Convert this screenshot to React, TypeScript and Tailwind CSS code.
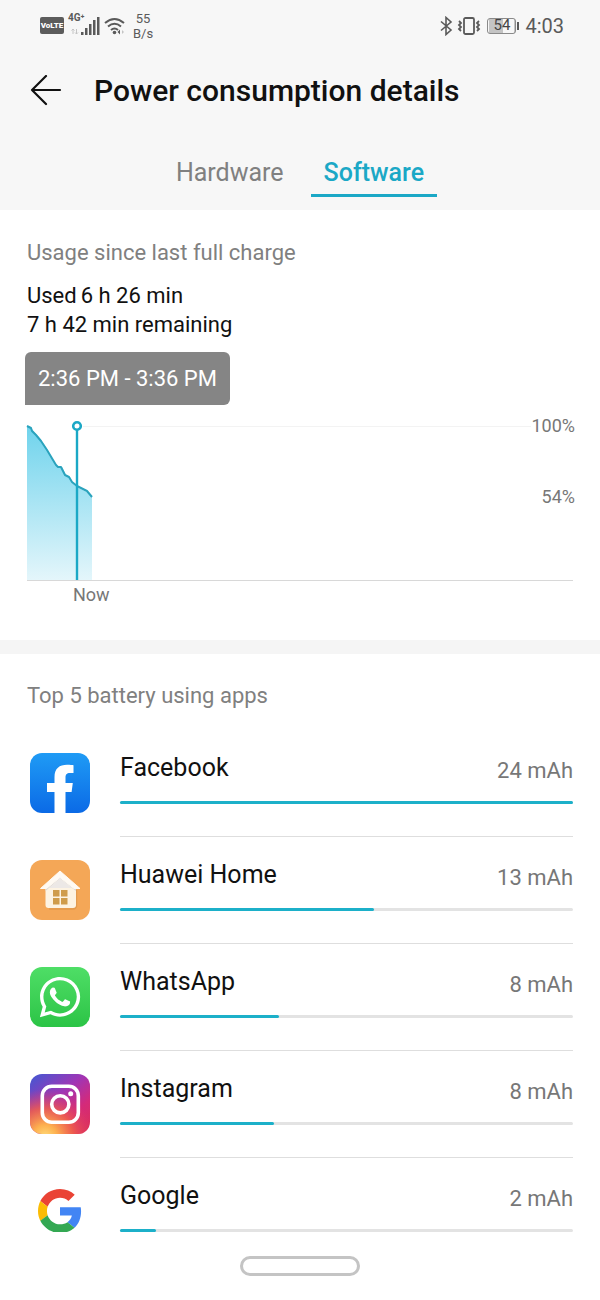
import type { ReactNode } from "react"
import { FaWhatsapp } from "react-icons/fa"

type AppUsage = {
  name: string
  usage: number
  percent: number
  icon: ReactNode
}

function FacebookIcon() {
  return (
    <svg viewBox="0 0 60 60" className="size-full" aria-hidden="true">
      <defs>
        <linearGradient id="fb" x1="0" y1="0" x2="0" y2="1">
          <stop offset="0" stopColor="#1f9bf5" />
          <stop offset="1" stopColor="#0b6ae6" />
        </linearGradient>
      </defs>
      <rect width="60" height="60" rx="12" fill="url(#fb)" />
      <path
        d="M24.500 60V39H17V30H24.500V24C24.500 15.500 29.500 11.800 37 11.800C40 11.800 42.500 12 43.500 12.300V20H40C36.500 20 35.500 21.700 35.500 24.600V30H42.800L41.600 39H35.500V60Z"
        fill="#fff"
      />
    </svg>
  )
}

function HomeIcon() {
  return (
    <svg viewBox="0 0 60 60" className="size-full" aria-hidden="true">
      <rect width="60" height="60" rx="12" fill="#f4a757" />
      <path d="M46.500 30V46Q46 48.500 43 49H19" fill="none" stroke="#e29a4e" strokeWidth="1.500" />
      <path d="M15.500 26L30 14L46 26V45Q46 48 43 48H18.500Q15.500 48 15.500 45Z" fill="#fdf3e2" />
      <path d="M15.500 28L30 16L46 28V31L30 18.500L15.500 31Z" fill="#dcd8d6" />
      <path d="M19 28L30 18.500L42 28Z" fill="#ece8e6" />
      <path d="M30 11L50 28.500H44L30 17.500L16.500 28.500H10.500Z" fill="#fffaf3" stroke="#fffaf3" strokeLinejoin="round" />
      <g fill="#cf9c4b">
        <rect x="23" y="30" width="6.500" height="6.500" />
        <rect x="31" y="30" width="6.500" height="6.500" />
        <rect x="23" y="38" width="6.500" height="6.500" />
        <rect x="31" y="38" width="6.500" height="6.500" />
      </g>
    </svg>
  )
}

function WhatsAppIcon() {
  return (
    <span className="flex size-full items-center justify-center rounded-xl bg-linear-to-b from-[#4ede66] to-[#2bc446]">
      <FaWhatsapp className="size-[46px] text-white" aria-hidden="true" />
    </span>
  )
}

function InstagramIcon() {
  return (
    <svg viewBox="0 0 60 60" className="size-full" aria-hidden="true">
      <defs>
        <linearGradient id="igBase" x1="0.1" y1="0" x2="0.9" y2="1">
          <stop offset="0" stopColor="#4a55d0" />
          <stop offset="0.400" stopColor="#a035b5" />
          <stop offset="0.700" stopColor="#d42a7a" />
          <stop offset="1" stopColor="#dc3058" />
        </linearGradient>
        <radialGradient id="igWarm" cx="0.25" cy="1.05" r="0.8">
          <stop offset="0" stopColor="#ffdc7a" />
          <stop offset="0.250" stopColor="#fdb04f" />
          <stop offset="0.600" stopColor="#f0604a" stopOpacity="0.850" />
          <stop offset="1" stopColor="#e03a6a" stopOpacity="0" />
        </radialGradient>
      </defs>
      <rect width="60" height="60" rx="12" fill="url(#igBase)" />
      <rect width="60" height="60" rx="12" fill="url(#igWarm)" />
      <g fill="none" stroke="#fff" strokeWidth="3.600">
        <rect x="12.300" y="12.300" width="36" height="36" rx="9.500" />
        <circle cx="30.300" cy="30.300" r="8.600" />
      </g>
      <circle cx="40.700" cy="19.700" r="2.500" fill="#fff" />
    </svg>
  )
}

function GoogleIcon() {
  return (
    <svg viewBox="0 0 48 48" className="size-11" aria-hidden="true">
      <path fill="#EA4335" d="M24 9.500c3.540 0 6.710 1.220 9.210 3.600l6.850-6.850C35.900 2.380 30.470 0 24 0 14.620 0 6.510 5.380 2.560 13.220l7.980 6.190C12.430 13.720 17.740 9.500 24 9.500z" />
      <path fill="#4285F4" d="M46.980 24.550c0-1.570-.15-3.090-.38-4.550H24v9.020h12.940c-.58 2.960-2.260 5.480-4.780 7.180l7.730 6c4.510-4.180 7.090-10.360 7.090-17.650z" />
      <path fill="#FBBC05" d="M10.530 28.590c-.48-1.450-.76-2.990-.76-4.590s.27-3.140.76-4.590l-7.980-6.190C.92 16.460 0 20.120 0 24c0 3.880.92 7.540 2.560 10.780l7.970-6.190z" />
      <path fill="#34A853" d="M24 48c6.480 0 11.930-2.130 15.890-5.810l-7.730-6c-2.150 1.450-4.920 2.300-8.160 2.300-6.260 0-11.570-4.220-13.470-9.910l-7.980 6.190C6.510 42.620 14.620 48 24 48z" />
    </svg>
  )
}

const apps: AppUsage[] = [
  { name: "Facebook", usage: 24, percent: 100, icon: <FacebookIcon /> },
  { name: "Huawei Home", usage: 13, percent: 56, icon: <HomeIcon /> },
  { name: "WhatsApp", usage: 8, percent: 35, icon: <WhatsAppIcon /> },
  { name: "Instagram", usage: 8, percent: 34, icon: <InstagramIcon /> },
  { name: "Google", usage: 2, percent: 8, icon: <GoogleIcon /> },
]

function StatusBar() {
  return (
    <div className="flex h-[51px] items-center justify-between pr-9 pl-10 text-[#5a5a5a]">
      <div className="flex items-center">
        <span className="flex h-[17px] w-6 items-center justify-center rounded-xs bg-[#5c5c5c] text-[8px] font-black text-white">
          VoLTE
        </span>
        <div className="relative ml-1 h-5 w-8">
          <span className="absolute -top-1 left-0 text-[10px] leading-3 font-bold">4G⁺</span>
          <svg viewBox="0 0 32 20" className="size-full" aria-hidden="true">
            <path d="M5 18V13M3.500 14.500L5 13L6.500 14.500M8.500 13V18M7 16.500L8.500 18L10 16.500" fill="none" stroke="#c4c4c4" />
            <g fill="#5a5a5a">
              <rect x="13" y="16" width="2.500" height="3" />
              <rect x="17" y="12" width="2.500" height="7" />
              <rect x="21" y="8" width="2.500" height="11" />
              <rect x="25" y="4" width="2.500" height="15" />
              <rect x="29" y="1" width="2.500" height="18" />
            </g>
          </svg>
        </div>
        <svg viewBox="0 0 21 18" className="ml-1 h-[18px] w-[21px]" aria-hidden="true">
          <g fill="none" stroke="#5a5a5a" strokeWidth="2">
            <path d="M1 6Q10.500 -2 20 6" />
            <path d="M4 9.500Q10.500 4 17 9.500" />
            <path d="M7 13Q10.500 10 14 13" />
          </g>
          <circle cx="10.500" cy="15.500" r="1.800" fill="#5a5a5a" />
          <path d="M16 12.500V17.500L13.500 15Z" fill="#5a5a5a" />
          <path d="M18 13V17L20 15Z" fill="#c4c4c4" />
        </svg>
        <div className="ml-2 text-center text-[13px] leading-[15px]">
          <p>55</p>
          <p>B/s</p>
        </div>
      </div>

      <div className="flex items-center">
        <svg viewBox="0 0 14 20" className="h-5 w-[14px]" fill="none" stroke="#5a5a5a" strokeWidth="1.600" aria-hidden="true">
          <path d="M2 5.500L12 14L7 18.500V1.500L12 6L2 14.500" />
        </svg>
        <svg viewBox="0 0 24 18" className="ml-1 h-[18px] w-6" fill="none" stroke="#5a5a5a" strokeWidth="1.800" aria-hidden="true">
          <rect x="7" y="1" width="10" height="16" rx="1.500" />
          <path d="M2 4L4 6L2 8L4 10L2 12L4 14M22 4L20 6L22 8L20 10L22 12L20 14" strokeWidth="1.800" />
        </svg>
        <div className="ml-1.5 flex items-center gap-px">
          <span className="flex h-4 w-[29px] items-center justify-center rounded-[3px] border border-[#8a8a8a] bg-linear-to-r from-[#c4c4c4] from-54% to-transparent to-54% bg-origin-content p-px text-[15px] leading-none text-[#444]">
            54
          </span>
          <span className="h-2 w-0.5 bg-[#5a5a5a]" />
        </div>
        <span className="ml-1.5 text-xl leading-none">4:03</span>
      </div>
    </div>
  )
}

function UsageChart() {
  return (
    <div className="mt-[21px]">
      <div className="flex h-[155px] border-b border-[#d8d8d8]">
        <svg viewBox="0 0 66 154" className="h-[154px] w-[66px] overflow-visible" role="img" aria-label="Battery level">
          <defs>
            <linearGradient id="level" x1="0" y1="0" x2="0" y2="1">
              <stop offset="0" stopColor="#6fd3ec" />
              <stop offset="1" stopColor="#e4f6fb" />
            </linearGradient>
          </defs>
          <path
            d="M0 0L4 2L9 8L14 14L20 23L29 39L31 41H35L39 49L43 51L46 57L50 61L60 66L65 71V154H0Z"
            fill="url(#level)"
          />
          <path
            d="M0 0L4 2L5 5L9 9L14 15L20 24L29 39L31 41H34L36 45L38 49L42 51L45 56L50 60L60 65L65 71"
            fill="none"
            stroke="#2aa3bd"
            strokeWidth="2"
            strokeLinejoin="round"
          />
          <path d="M50 4V154" stroke="#1ba8c6" strokeWidth="2.400" />
          <circle cx="50" cy="0" r="3.800" fill="#fff" stroke="#1ba8c6" strokeWidth="2.600" />
        </svg>
        <div className="-ml-2.5 flex-1 border-t border-[#f3f3f3]" />
        <div className="-mt-3 -mr-0.5 flex flex-col items-end gap-[47px] text-lg leading-6 text-[#777]">
          <span>100%</span>
          <span>54%</span>
        </div>
      </div>
      <p className="ml-[46px] pt-0.5 text-lg leading-6 text-[#777]">Now</p>
    </div>
  )
}

function AppRow({ name, usage, percent, icon }: AppUsage) {
  return (
    <li className="group flex h-[107px] gap-[30px] pl-[3px]">
      <span className="mt-[23px] flex size-[60px] shrink-0 items-center justify-center">{icon}</span>
      <div className="flex-1 border-b border-[#dedede] pt-[22px] group-last:border-0">
        <div className="flex h-[49px] justify-between">
          <span className="text-[25px] leading-8 text-[#111]">{name}</span>
          <span className="pt-[3px] text-[22px] leading-8 text-[#777]">{usage} mAh</span>
        </div>
        <div className="h-[3px] rounded-full bg-[#e3e3e3]">
          <div className="h-full rounded-full bg-[#1cb0c9]" style={{ width: `${percent}%` }} />
        </div>
      </div>
    </li>
  )
}

export default function App() {
  return (
    <div className="min-h-screen bg-white font-[Roboto,'Liberation_Sans',sans-serif] text-[#111]">
      <header className="bg-[#f7f7f7] pb-[13px]">
        <StatusBar />

        <div className="flex h-20 items-center gap-8 pl-[30px]">
          <button type="button" aria-label="Back">
            <svg viewBox="0 0 32 32" className="size-8" fill="none" stroke="#111" strokeWidth="2.200" strokeLinecap="round" strokeLinejoin="round" aria-hidden="true">
              <path d="M16 1L2 15L16 29M2 15H30" />
            </svg>
          </button>
          <h1 className="text-3xl font-medium">Power consumption details</h1>
        </div>

        <nav className="flex h-[66px] justify-center gap-[14px] text-[25px]" role="tablist">
          <button type="button" role="tab" aria-selected="false" className="border-b-3 border-transparent px-[13px] pt-5 text-[#808080]">
            Hardware
          </button>
          <button type="button" role="tab" aria-selected="true" className="border-b-3 border-[#1ba8c6] px-[13px] pt-5 font-medium text-[#1ba8c6]">
            Software
          </button>
        </nav>
      </header>

      <main>
        <section className="px-[27px] pt-7 pb-[33px]">
          <h2 className="text-[22px] leading-[30px] text-[#808080]">Usage since last full charge</h2>
          <div className="mt-[13px] text-[22px] leading-[29px]">
            <p className="flex gap-1">
              <span>Used</span>
              <span>6 h 26 min</span>
            </p>
            <p>7 h 42 min remaining</p>
          </div>
          <div className="mt-[13px] -ml-0.5 w-fit rounded-md rounded-bl-none bg-[#858585] px-[13px] py-3 text-[22px] leading-[29px] text-white">
            2:36 PM - 3:36 PM
          </div>
          <UsageChart />
        </section>

        <section className="border-t-14 border-[#f5f5f5] px-[27px]">
          <h2 className="pt-[27px] pb-[19px] text-[22px] leading-[30px] text-[#808080]">Top 5 battery using apps</h2>
          {/* the last row runs under the navigation area */}
          <ul className="max-h-[502px] overflow-hidden">
            {apps.map((app) => (
              <AppRow key={app.name} {...app} />
            ))}
          </ul>
        </section>
      </main>

      <footer className="flex justify-center pt-6 pb-6">
        <button type="button" aria-label="Home" className="h-5 w-[120px] rounded-full border-3 border-[#c4c4c4]" />
      </footer>
    </div>
  )
}
